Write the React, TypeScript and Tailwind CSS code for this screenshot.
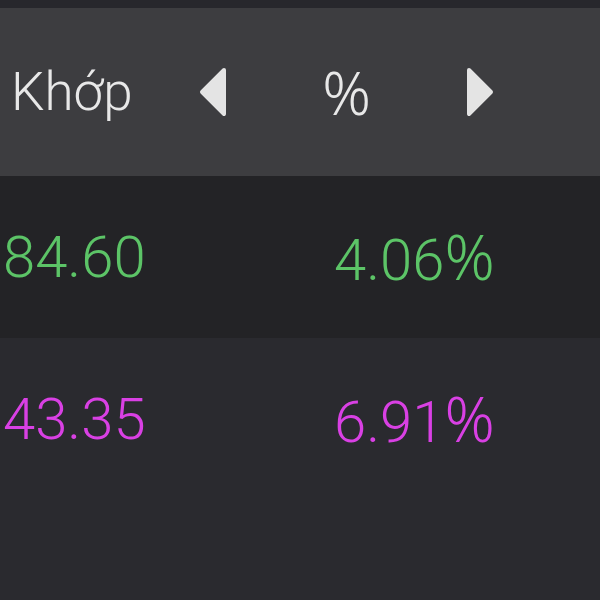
const rows = [
  { price: "84.60", pct: "4.06", color: "text-[#5cc467]", bg: "bg-[#232326]" },
  { price: "43.35", pct: "6.91", color: "text-[#d940e4]", bg: "bg-[#2a2a2f]" },
];

function Arrow({ dir }: { dir: "left" | "right" }) {
  const points = dir === "left" ? "25,3 3,25 25,47" : "3,3 25,25 3,47";
  return (
    <svg width="28" height="50" viewBox="0 0 28 50" className="shrink-0">
      <polygon
        points={points}
        fill="#e4e4e4"
        stroke="#e4e4e4"
        strokeWidth="4"
        strokeLinejoin="round"
      />
    </svg>
  );
}

export default function App() {
  return (
    <div className="w-[600px] h-[600px] flex flex-col bg-[#2a2a2f] overflow-hidden font-['Roboto',sans-serif] font-light">
      <div className="h-[8px] bg-[#27272c]" />

      {/* Header */}
      <div className="h-[168px] flex items-center bg-[#3d3d40] text-[#e8e8e8]">
        <div className="w-[199px] pl-[11px] text-[53px] leading-none">Khớp</div>
        <div className="w-[295px] flex items-center justify-between">
          <Arrow dir="left" />
          <span className="text-[60px] leading-none font-['Noto_Sans',sans-serif]">%</span>
          <Arrow dir="right" />
        </div>
      </div>

      {/* Rows */}
      {rows.map((r) => (
        <div key={r.price} className={`h-[162px] flex items-center ${r.bg} ${r.color}`}>
          <span className="w-[334px] pl-[3px] text-[58px] leading-none">{r.price}</span>
          <span className="text-[58px] leading-none">
            {r.pct}
            <span className="text-[62px] font-['Noto_Sans',sans-serif]">%</span>
          </span>
        </div>
      ))}
    </div>
  );
}
